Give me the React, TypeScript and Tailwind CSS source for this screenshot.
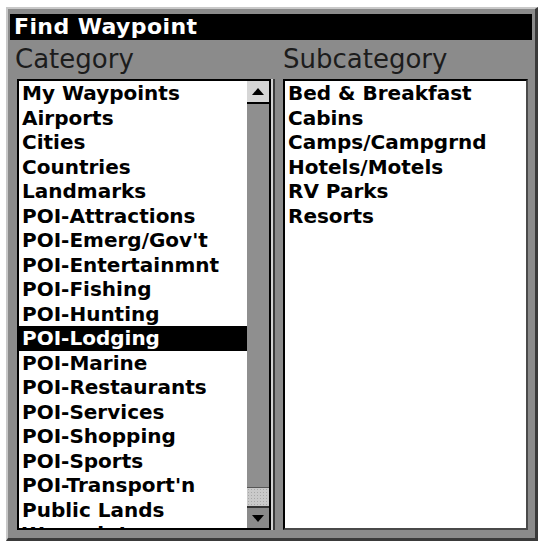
import React from "react";

const categories = [
  "My Waypoints",
  "Airports",
  "Cities",
  "Countries",
  "Landmarks",
  "POI-Attractions",
  "POI-Emerg/Gov't",
  "POI-Entertainmnt",
  "POI-Fishing",
  "POI-Hunting",
  "POI-Lodging",
  "POI-Marine",
  "POI-Restaurants",
  "POI-Services",
  "POI-Shopping",
  "POI-Sports",
  "POI-Transport'n",
  "Public Lands",
  "Waypoints",
];

const subcategories = [
  "Bed & Breakfast",
  "Cabins",
  "Camps/Campgrnd",
  "Hotels/Motels",
  "RV Parks",
  "Resorts",
];

const font = { fontFamily: '"DejaVu Sans", Verdana, sans-serif' };

export default function App() {
  return (
    <div className="w-[542px] h-[545px] bg-white pt-[7px] pl-[6px] pr-[4px] pb-[4px]" style={font}>
      <div className="h-full flex flex-col bg-[#8b8b8b] border-t-2 border-l-2 border-r-[3px] border-b-[3px] border-t-[#c8c8c8] border-l-[#c8c8c8] border-r-[#3a3a3a] border-b-[#3a3a3a] pt-[5px] pl-[2px] pr-[3px]">
        <div className="h-[26px] bg-black text-white font-bold text-[22px] leading-[26px] pl-[4px] tracking-[0.4px]">
          Find Waypoint
        </div>
        <div className="flex flex-1 pl-[5px] gap-[8px]">
          {/* Left column */}
          <div className="flex flex-col w-[260px]">
            <div className="h-[39px] pt-[6px] text-[26px] leading-[26px] text-[#1c1c1c]">Category</div>
            <div className="ml-[2px] w-[254px] h-[451px] border-2 border-black bg-white flex shadow-[2px_0_0_0_#d4d4d4,4px_0_0_0_#3a3a3a]">
              <div className="flex-1 overflow-hidden">
                {categories.map((c) => (
                  <div
                    key={c}
                    className={`h-[24.5px] leading-[24.5px] text-[20px] font-bold pl-[3px] whitespace-nowrap ${
                      c === "POI-Lodging" ? "bg-black text-white" : "text-black"
                    }`}
                  >
                    {c}
                  </div>
                ))}
              </div>
              <div className="w-[22px] flex flex-col bg-[#8f8f8f]">
                <div className="h-[23px] bg-[#d6d6d6] border-b-2 border-black flex items-center justify-center">
                  <svg width="12" height="7" viewBox="0 0 12 7">
                    <polygon points="0,7 6,0 12,7" fill="#000" />
                  </svg>
                </div>
                <div className="flex-1" />
                <div className="h-[19px] bg-[#cacaca] border-t border-[#555] bg-[radial-gradient(#a8a8a8_1px,transparent_1px)] bg-[length:3px_3px]" />
                <div className="h-[22px] bg-[#8a8a8a] border-t-2 border-[#333] flex items-center justify-center">
                  <svg width="12" height="7" viewBox="0 0 12 7">
                    <polygon points="0,0 12,0 6,7" fill="#000" />
                  </svg>
                </div>
              </div>
            </div>
          </div>
          {/* Right column */}
          <div className="flex flex-col w-[245px]">
            <div className="h-[39px] pt-[6px] text-[26px] leading-[26px] text-[#1c1c1c]">Subcategory</div>
            <div className="w-[245px] h-[451px] border-2 border-t-black border-l-black border-r-[#4a4a4a] border-b-[#4a4a4a] bg-white overflow-hidden">
              {subcategories.map((c) => (
                <div key={c} className="h-[24.5px] leading-[24.5px] text-[20px] font-bold pl-[3px] whitespace-nowrap text-black">
                  {c}
                </div>
              ))}
            </div>
          </div>
        </div>
      </div>
    </div>
  );
}
